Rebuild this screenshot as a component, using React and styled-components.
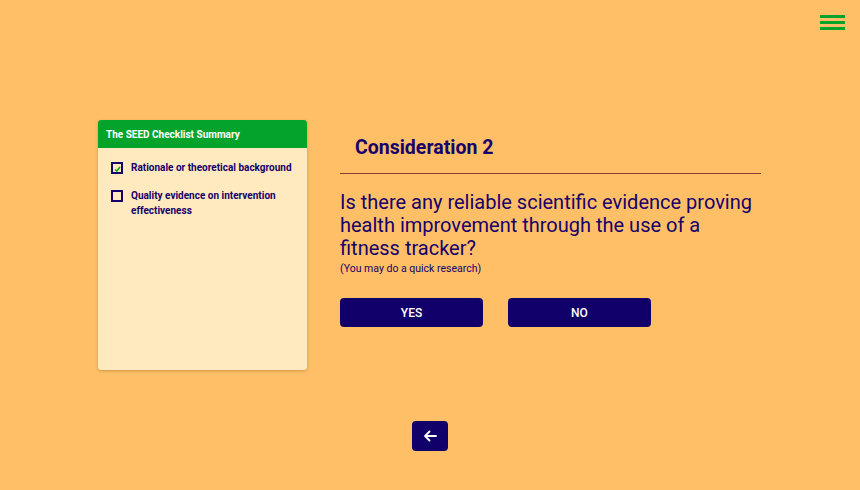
import React from 'react'
import styled, { createGlobalStyle } from 'styled-components'

const GlobalStyle = createGlobalStyle`
  html, body { margin: 0; padding: 0; }
  body {
    background: #ffbf66;
    font-family: Roboto, 'Liberation Sans', sans-serif;
    color: #16006b;
  }
`;

const Page = styled.div`
  position: relative;
  width: 860px;
  height: 490px;
  background: #ffbf66;
  overflow: hidden;
`;

const Menu = styled.button`
  position: absolute;
  top: 15px;
  right: 15px;
  width: 25px;
  height: 15px;
  padding: 0;
  border: none;
  background: transparent;
  display: flex;
  flex-direction: column;
  justify-content: space-between;
  cursor: pointer;
`;

const MenuBar = styled.span`
  display: block;
  height: 3px;
  background: #06a22b;
`;

const Layout = styled.div`
  display: flex;
  align-items: flex-start;
  padding: 120px 0 0 98px;
`;

const Card = styled.aside`
  width: 209px;
  height: 250px;
  background: #feeabe;
  border-radius: 3px;
  box-shadow: 0 1px 3px rgba(120, 70, 0, 0.35);
  overflow: hidden;
`;

const CardHeader = styled.div`
  height: 28px;
  background: #04a42c;
  color: #ffffff;
  font-size: 10px;
  font-weight: 700;
  display: flex;
  align-items: center;
  padding-left: 8px;
`;

const List = styled.ul`
  list-style: none;
  margin: 0;
  padding: 12px 10px 0 13px;
  display: flex;
  flex-direction: column;
  gap: 13px;
`;

const Item = styled.li`
  display: flex;
  align-items: flex-start;
  gap: 8px;
  font-size: 10px;
  font-weight: 700;
  line-height: 15px;
`;

const Box = styled.span`
  flex: none;
  box-sizing: border-box;
  width: 12px;
  height: 12px;
  margin-top: 2px;
  border: 2px solid #16006b;
  display: flex;
  align-items: flex-end;
  justify-content: center;
`;

const Main = styled.main`
  margin-left: 33px;
  width: 421px;
`;

const Heading = styled.h1`
  margin: 0;
  padding: 16px 0 14px 15px;
  font-size: 19.5px;
  font-weight: 700;
  border-bottom: 1px solid #8a3a36;
`;

const Question = styled.h2`
  margin: 17px 0 0;
  font-size: 20px;
  font-weight: 400;
  line-height: 23px;
`;

const Hint = styled.p`
  margin: 2px 0 0;
  font-size: 10.5px;
`;

const Answers = styled.div`
  display: flex;
  gap: 25px;
  margin-top: 23px;
`;

const Answer = styled.button`
  width: 143px;
  height: 29px;
  border: none;
  border-radius: 4px;
  background: #12006a;
  color: #ffffff;
  font-family: Roboto, 'Liberation Sans', sans-serif;
  font-size: 12px;
  font-weight: 500;
  cursor: pointer;
`;

const Footer = styled.div`
  display: flex;
  justify-content: center;
  padding-top: 51px;
  width: 860px;
`;

const Back = styled.button`
  width: 36px;
  height: 30px;
  border: none;
  border-radius: 4px;
  background: #12006a;
  display: flex;
  align-items: center;
  justify-content: center;
  cursor: pointer;
`;

const items = [
  { label: 'Rationale or theoretical background', done: true },
  { label: 'Quality evidence on intervention effectiveness', done: false },
];

export default function App() {
  return (
    <Page>
      <GlobalStyle />
      <Menu aria-label="menu">
        <MenuBar /><MenuBar /><MenuBar />
      </Menu>
      <Layout>
        <Card>
          <CardHeader>The SEED Checklist Summary</CardHeader>
          <List>
            {items.map(it => (
              <Item key={it.label}>
                <Box>
                  {it.done && (
                    <svg width="7" height="6" viewBox="0 0 7 6">
                      <path d="M1 3.5 L2.8 5 L6 1" stroke="#06a22b" strokeWidth="1.6" fill="none" />
                    </svg>
                  )}
                </Box>
                <span>{it.label}</span>
              </Item>
            ))}
          </List>
        </Card>
        <Main>
          <Heading>Consideration 2</Heading>
          <Question>
            Is there any reliable scientific evidence proving health improvement through the use of a fitness tracker?
          </Question>
          <Hint>(You may do a quick research)</Hint>
          <Answers>
            <Answer>YES</Answer>
            <Answer>NO</Answer>
          </Answers>
        </Main>
      </Layout>
      <Footer>
        <Back aria-label="back">
          <svg width="14" height="12" viewBox="0 0 14 12">
            <path d="M13 6 H2 M6.5 1.5 L2 6 L6.5 10.5" stroke="#fff" strokeWidth="1.8" fill="none" strokeLinecap="round" strokeLinejoin="round" />
          </svg>
        </Back>
      </Footer>
    </Page>
  )
}
